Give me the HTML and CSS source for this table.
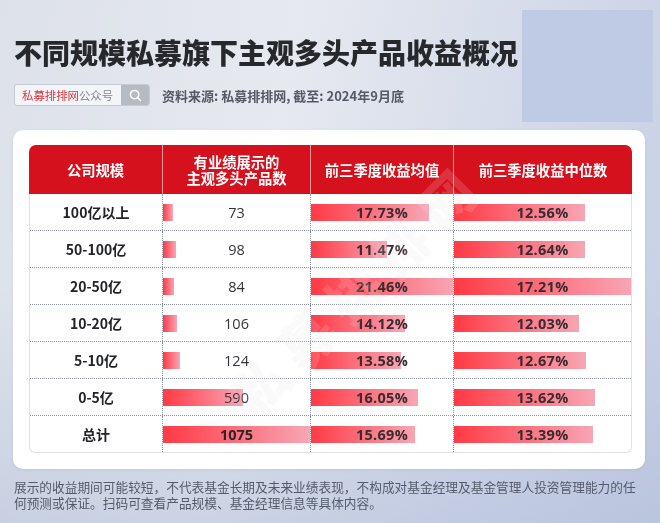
FILE: index.html
```
<!DOCTYPE html>
<html lang="zh-CN">
<head>
<meta charset="utf-8">
<title>不同规模私募旗下主观多头产品收益概况</title>
<link rel="stylesheet" href="styles.css">
</head>
<body>
<div class="page">
  <h1 class="title">不同规模私募旗下主观多头产品收益概况</h1>
  <div class="meta">
    <div class="search">
      <span class="search-input"><span class="brand">私募排排网</span>公众号</span>
      <span class="search-btn">
        <svg width="13" height="13" viewBox="0 0 13 13"><circle cx="5.6" cy="5.6" r="4.2" fill="none" stroke="#fff" stroke-width="1.5"/><path d="M8.7 8.7 L11.6 11.6" stroke="#fff" stroke-width="1.6" stroke-linecap="round"/></svg>
      </span>
    </div>
    <p class="source">资料来源: 私募排排网, 截至: 2024年9月底</p>
  </div>
  <div class="card">
    <div class="table">
      <div class="head">
        <div class="hcell">公司规模</div>
        <div class="hcell"><span class="hline">有业绩展示的</span><span class="hline">主观多头产品数</span></div>
        <div class="hcell">前三季度收益均值</div>
        <div class="hcell">前三季度收益中位数</div>
      </div>
      <div class="body">
        <div class="row">
          <div class="cell label">100亿以上</div>
          <div class="cell num bar" style="--w:10px">73</div>
          <div class="cell pct bar" style="--w:118px">17.73%</div>
          <div class="cell pct bar" style="--w:131px">12.56%</div>
        </div>
        <div class="row">
          <div class="cell label">50-100亿</div>
          <div class="cell num bar" style="--w:13px">98</div>
          <div class="cell pct bar" style="--w:76px">11.47%</div>
          <div class="cell pct bar" style="--w:131px">12.64%</div>
        </div>
        <div class="row">
          <div class="cell label">20-50亿</div>
          <div class="cell num bar" style="--w:11px">84</div>
          <div class="cell pct bar" style="--w:143px">21.46%</div>
          <div class="cell pct bar" style="--w:178px">17.21%</div>
        </div>
        <div class="row">
          <div class="cell label">10-20亿</div>
          <div class="cell num bar" style="--w:14px">106</div>
          <div class="cell pct bar" style="--w:94px">14.12%</div>
          <div class="cell pct bar" style="--w:125px">12.03%</div>
        </div>
        <div class="row">
          <div class="cell label">5-10亿</div>
          <div class="cell num bar" style="--w:17px">124</div>
          <div class="cell pct bar" style="--w:90px">13.58%</div>
          <div class="cell pct bar" style="--w:132px">12.67%</div>
        </div>
        <div class="row">
          <div class="cell label">0-5亿</div>
          <div class="cell num bar" style="--w:80px">590</div>
          <div class="cell pct bar" style="--w:107px">16.05%</div>
          <div class="cell pct bar" style="--w:141px">13.62%</div>
        </div>
        <div class="row last">
          <div class="cell label">总计</div>
          <div class="cell num total bar" style="--w:147px">1075</div>
          <div class="cell pct bar" style="--w:104px">15.69%</div>
          <div class="cell pct bar" style="--w:139px">13.39%</div>
        </div>
      </div>
    </div>
    <div class="watermark">私募排排网</div>
  </div>
  <p class="note">展示的收益期间可能较短，不代表基金长期及未来业绩表现，不构成对基金经理及基金管理人投资管理能力的任何预测或保证。扫码可查看产品规模、基金经理信息等具体内容。</p>
</div>
</body>
</html>
```
FILE: styles.css
```
* { box-sizing: border-box; }

body {
  margin: 0;
  font-family: "Noto Sans CJK SC", "Noto Sans", sans-serif;
}

.page {
  width: 660px;
  height: 523px;
  overflow: hidden;
  padding-top: 34px;
  background:
    linear-gradient(#bfcbe4, #bfcbe4) 522px 10px / 131px 112px no-repeat,
    linear-gradient(180deg, rgba(255,255,255,0) 55%, rgba(170,184,214,0.45) 100%),
    linear-gradient(100deg, #dde1e9 0%, #e6e9f0 40%, #d6dcea 70%, #c6cfe5 100%);
}

.title {
  margin: 0 0 0 14px;
  font-size: 28px;
  line-height: 36px;
  font-weight: 900;
  color: #27282c;
  letter-spacing: 0;
}

.meta {
  display: flex;
  align-items: center;
  gap: 12px;
  margin: 14px 0 0 14px;
  height: 22px;
}

.search {
  display: flex;
  width: 136px;
  height: 22px;
  border: 1px solid #c6cad3;
  border-radius: 3px;
  overflow: hidden;
  background: #f4f5f8;
}

.search-input {
  width: 106px;
  padding-left: 7px;
  font-size: 11.4px;
  line-height: 20px;
  color: #858993;
  white-space: nowrap;
}

.brand { color: #d8353c; }

.search-btn {
  flex: 1;
  display: flex;
  align-items: center;
  justify-content: center;
  background: #b6bac3;
}

.source {
  margin: 0;
  font-size: 13px;
  font-weight: 700;
  color: #555a66;
  white-space: nowrap;
}

.card {
  position: relative;
  margin: 24px 15px 0 13px;
  height: 339px;
  padding: 15px 13px 0 16px;
  background: #fff;
  border-radius: 10px;
  box-shadow: 0 1px 3px rgba(120, 130, 160, 0.15);
}

.table { width: 603px; }

.head {
  display: grid;
  grid-template-columns: 133px 148px 143px 179px;
  height: 49px;
  background: #d4111d;
  border-radius: 7px 7px 0 0;
}

.hcell {
  display: flex;
  flex-direction: column;
  align-items: center;
  justify-content: center;
  text-align: center;
  color: #fff;
  font-size: 14.3px;
  font-weight: 700;
  line-height: 16px;
}

.hline { display: block; height: 16px; line-height: 16px; }

.hcell + .hcell { border-left: 1px solid rgba(255, 255, 255, 0.55); }

.body {
  border: 1px solid #dfe1e7;
  border-top: 0;
  border-radius: 0 0 6px 6px;
}

.row {
  display: grid;
  grid-template-columns: 132px 148px 143px 178px;
  height: 37px;
  border-bottom: 1px dotted #8b91a6;
}

.row.last { border-bottom: 0; height: 36px; }

.cell {
  display: flex;
  align-items: center;
  justify-content: center;
  white-space: nowrap;
}

.cell + .cell { border-left: 1px dotted #8b91a6; }

.bar {
  background: linear-gradient(90deg, #ff3a45, #f7a6b5) no-repeat 0 50% / var(--w) 17px;
}

.label {
  font-size: 14px;
  font-weight: 700;
  color: #222327;
}

.num {
  font-family: "Open Sans", "Noto Sans CJK SC", sans-serif;
  font-size: 14.5px;
  color: #35353a;
}

.num.total { font-weight: 700; color: #2e2427; }

.pct {
  font-family: "Open Sans", "Noto Sans CJK SC", sans-serif;
  font-size: 14.5px;
  font-weight: 700;
  letter-spacing: 0.3px;
  color: #3a2b2e;
}

.watermark {
  position: absolute;
  left: 178px;
  top: 118px;
  transform: rotate(-45deg);
  font-size: 54px;
  font-weight: 900;
  letter-spacing: 12px;
  color: #e2e2e2;
  mix-blend-mode: luminosity;
  opacity: 0.18;
  white-space: nowrap;
}

.note {
  margin: 10px 14px 0;
  font-size: 12.7px;
  line-height: 16px;
  color: #555b6a;
}
```
